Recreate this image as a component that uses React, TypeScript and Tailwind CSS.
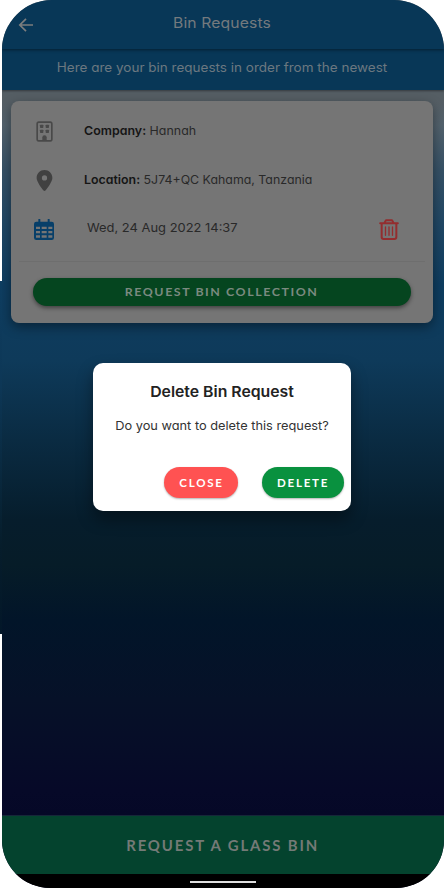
import type { ReactNode } from "react";
import { FaLocationDot } from "react-icons/fa6";

function Row({ icon, children }: { icon: ReactNode; children: ReactNode }) {
  return (
    <div className="flex h-[49px] items-center">
      <div className="flex w-[66px] justify-center">{icon}</div>
      {children}
    </div>
  );
}

function BackArrow() {
  return (
    <svg width="16" height="16" viewBox="0 0 16 16" fill="none" stroke="#7b7d7e" strokeWidth="1.7" aria-label="Back">
      <path d="M15 8H1.8M8 1.8L1.8 8L8 14.2" />
    </svg>
  );
}

function BuildingIcon() {
  return (
    <svg width="17" height="21" viewBox="0 0 51 63" fill="#494949">
      <rect x="3.5" y="3.5" width="44" height="56" rx="5" fill="none" stroke="#494949" strokeWidth="5" />
      <rect x="12" y="11" width="10" height="10" rx="2" />
      <rect x="29" y="11" width="10" height="10" rx="2" />
      <rect x="12" y="26" width="10" height="10" rx="2" />
      <rect x="29" y="26" width="10" height="10" rx="2" />
      <path d="M19 60V49a6.5 6.5 0 0 1 13 0v11z" />
    </svg>
  );
}

function CalendarIcon() {
  return (
    <svg width="20" height="21" viewBox="0 0 60 63" fill="#073f69">
      <path
        fillRule="evenodd"
        d="M13 2a3 3 0 0 1 6 0v6h22V2a3 3 0 0 1 6 0v6h6a7 7 0 0 1 7 7v41a7 7 0 0 1-7 7H7a7 7 0 0 1-7-7V15a7 7 0 0 1 7-7h6zM6 23v7h12v-7zM23 23v7h15v-7zM43 23v7h12v-7zM6 36v7h12v-7zM23 36v7h15v-7zM43 36v7h12v-7zM6 49v7h12v-7zM23 49v7h15v-7zM43 49v7h12v-7z"
      />
    </svg>
  );
}

function TrashIcon() {
  return (
    <svg width="20" height="21" viewBox="0 0 60 63" fill="none" stroke="#932d2e" strokeWidth="6" strokeLinecap="round" strokeLinejoin="round">
      <path d="M3.5 12.5h53M16 12l5-8.5h18l5 8.5M8 13v41a6 6 0 0 0 6 6h32a6 6 0 0 0 6-6V13" />
      <path d="M19.5 24v25M30 24v25M40.5 24v25" strokeWidth="4" />
    </svg>
  );
}

export default function App() {
  return (
    <div className="relative h-[888px] w-[444px] overflow-hidden bg-white font-['Inter','Liberation_Sans',sans-serif] [font-feature-settings:'cv11']">
      <div className="absolute left-0 top-[281px] h-[353px] w-[2px] bg-[linear-gradient(#0e3d60_0%,#0d3756_30%,#061d2b_75%,#031729_100%)]" />
      <div className="relative ml-[2px] flex h-[888px] w-[442px] flex-col overflow-hidden rounded-t-[50px] rounded-b-[48px] bg-[linear-gradient(#555e64_0px,#555e64_100px,#53626d_125px,#365166_170px,#204765_225px,#0e3d60_285px,#0e3a5a_360px,#0a2b42_440px,#061d2c_520px,#061c28_565px,#021529_620px,#061128_700px,#060928_790px,#050827_815px)]">
        <header className="relative z-10 flex h-[49px] shrink-0 items-center bg-[#083757] shadow-[0_1px_3px_rgba(0,0,0,0.45)]">
          <div className="flex w-[48px] justify-center"><BackArrow /></div>
          <h1 className="w-[344px] scale-x-[1.1] pb-[4px] text-center text-[14.3px] tracking-[0.1px] text-[#747a7e]">Bin Requests</h1>
        </header>
        <div className="flex h-[41px] shrink-0 items-center justify-center bg-[#083757] pb-[3px] text-[12.5px] text-[#6b7780] shadow-[0_1px_2px_rgba(0,0,0,0.4)]">
          <span className="mr-[2px] scale-x-[1.08] whitespace-nowrap">Here are your bin requests in order from the newest</span>
        </div>

        <section className="ml-[9px] mt-[11px] h-[222px] w-[422px] shrink-0 rounded-[8px] bg-[#757575] pt-[6px] text-[12.2px] text-[#292929] shadow-[0_4px_12px_rgba(0,0,0,0.4)]">
          <Row icon={<BuildingIcon />}>
            <p className="ml-[7px] origin-left scale-x-[1.02] whitespace-nowrap pb-[1px]"><span className="font-semibold text-[#151515]">Company:</span> Hannah</p>
          </Row>
          <Row icon={<FaLocationDot size={21} color="#414141" />}>
            <p className="ml-[7px] origin-left scale-x-[1.015] whitespace-nowrap pb-[1px]"><span className="font-semibold text-[#151515]">Location:</span> 5J74+QC Kahama, Tanzania</p>
          </Row>
          <Row icon={<CalendarIcon />}>
            <p className="ml-[10px] w-[270px] origin-left scale-x-[1.06] whitespace-nowrap pb-[3px]">Wed, 24 Aug 2022 14:37</p>
            <button className="ml-[22px]" aria-label="Delete"><TrashIcon /></button>
          </Row>
          <div className="mx-[8px] mt-[7px] h-px bg-[#6e6e6e]" />
          <button className="ml-[22px] mt-[16px] flex h-[28px] w-[378px] items-center justify-center rounded-full bg-[#05451f] font-['Lato',sans-serif] text-[12px] font-bold tracking-[1.5px] text-[#7b8a80] shadow-[0_2px_4px_rgba(0,0,0,0.45)]"><span className="scale-x-[1.035]">REQUEST BIN COLLECTION</span></button>
        </section>

        <section className="ml-[91px] mt-[40px] h-[148px] w-[258px] shrink-0 rounded-[10px] bg-white text-center shadow-[0_8px_16px_rgba(0,0,0,0.4)]">
          <h2 className="scale-x-[1.067] pt-[19px] text-[14.8px] font-semibold leading-[20px] text-[#222222]">Delete Bin Request</h2>
          <p className="mt-[15px] scale-x-[1.05] whitespace-nowrap text-[12.2px] leading-[17px] text-[#333333]">Do you want to delete this request?</p>
          <div className="mt-[33px] flex justify-end gap-[24px] pr-[7px] font-['Lato',sans-serif] text-[10.7px] font-bold tracking-[1.6px] text-white">
            <button className="flex h-[31px] w-[74px] items-center justify-center rounded-full bg-[#ff5252] pt-[2px] shadow-[0_1px_2px_rgba(0,0,0,0.3)]"><span className="scale-x-[1.08]">CLOSE</span></button>
            <button className="flex h-[31px] w-[82px] items-center justify-center rounded-full bg-[#09913f] pt-[2px] shadow-[0_1px_2px_rgba(0,0,0,0.3)]"><span className="scale-x-[1.08]">DELETE</span></button>
          </div>
        </section>

        <footer className="mt-auto shrink-0">
          <button className="flex h-[59px] w-full items-center justify-center border-t border-[#152739] bg-[#04432e] pt-[1px] font-['Lato',sans-serif] text-[14.5px] font-bold tracking-[1.8px] text-[#747a76]"><span className="scale-x-[1.03]">REQUEST A GLASS BIN</span></button>
          <div className="flex h-[14px] justify-center bg-black pt-[7px]"><div className="h-[2px] w-[66px] bg-[#dedede]" /></div>
        </footer>
      </div>
    </div>
  );
}
